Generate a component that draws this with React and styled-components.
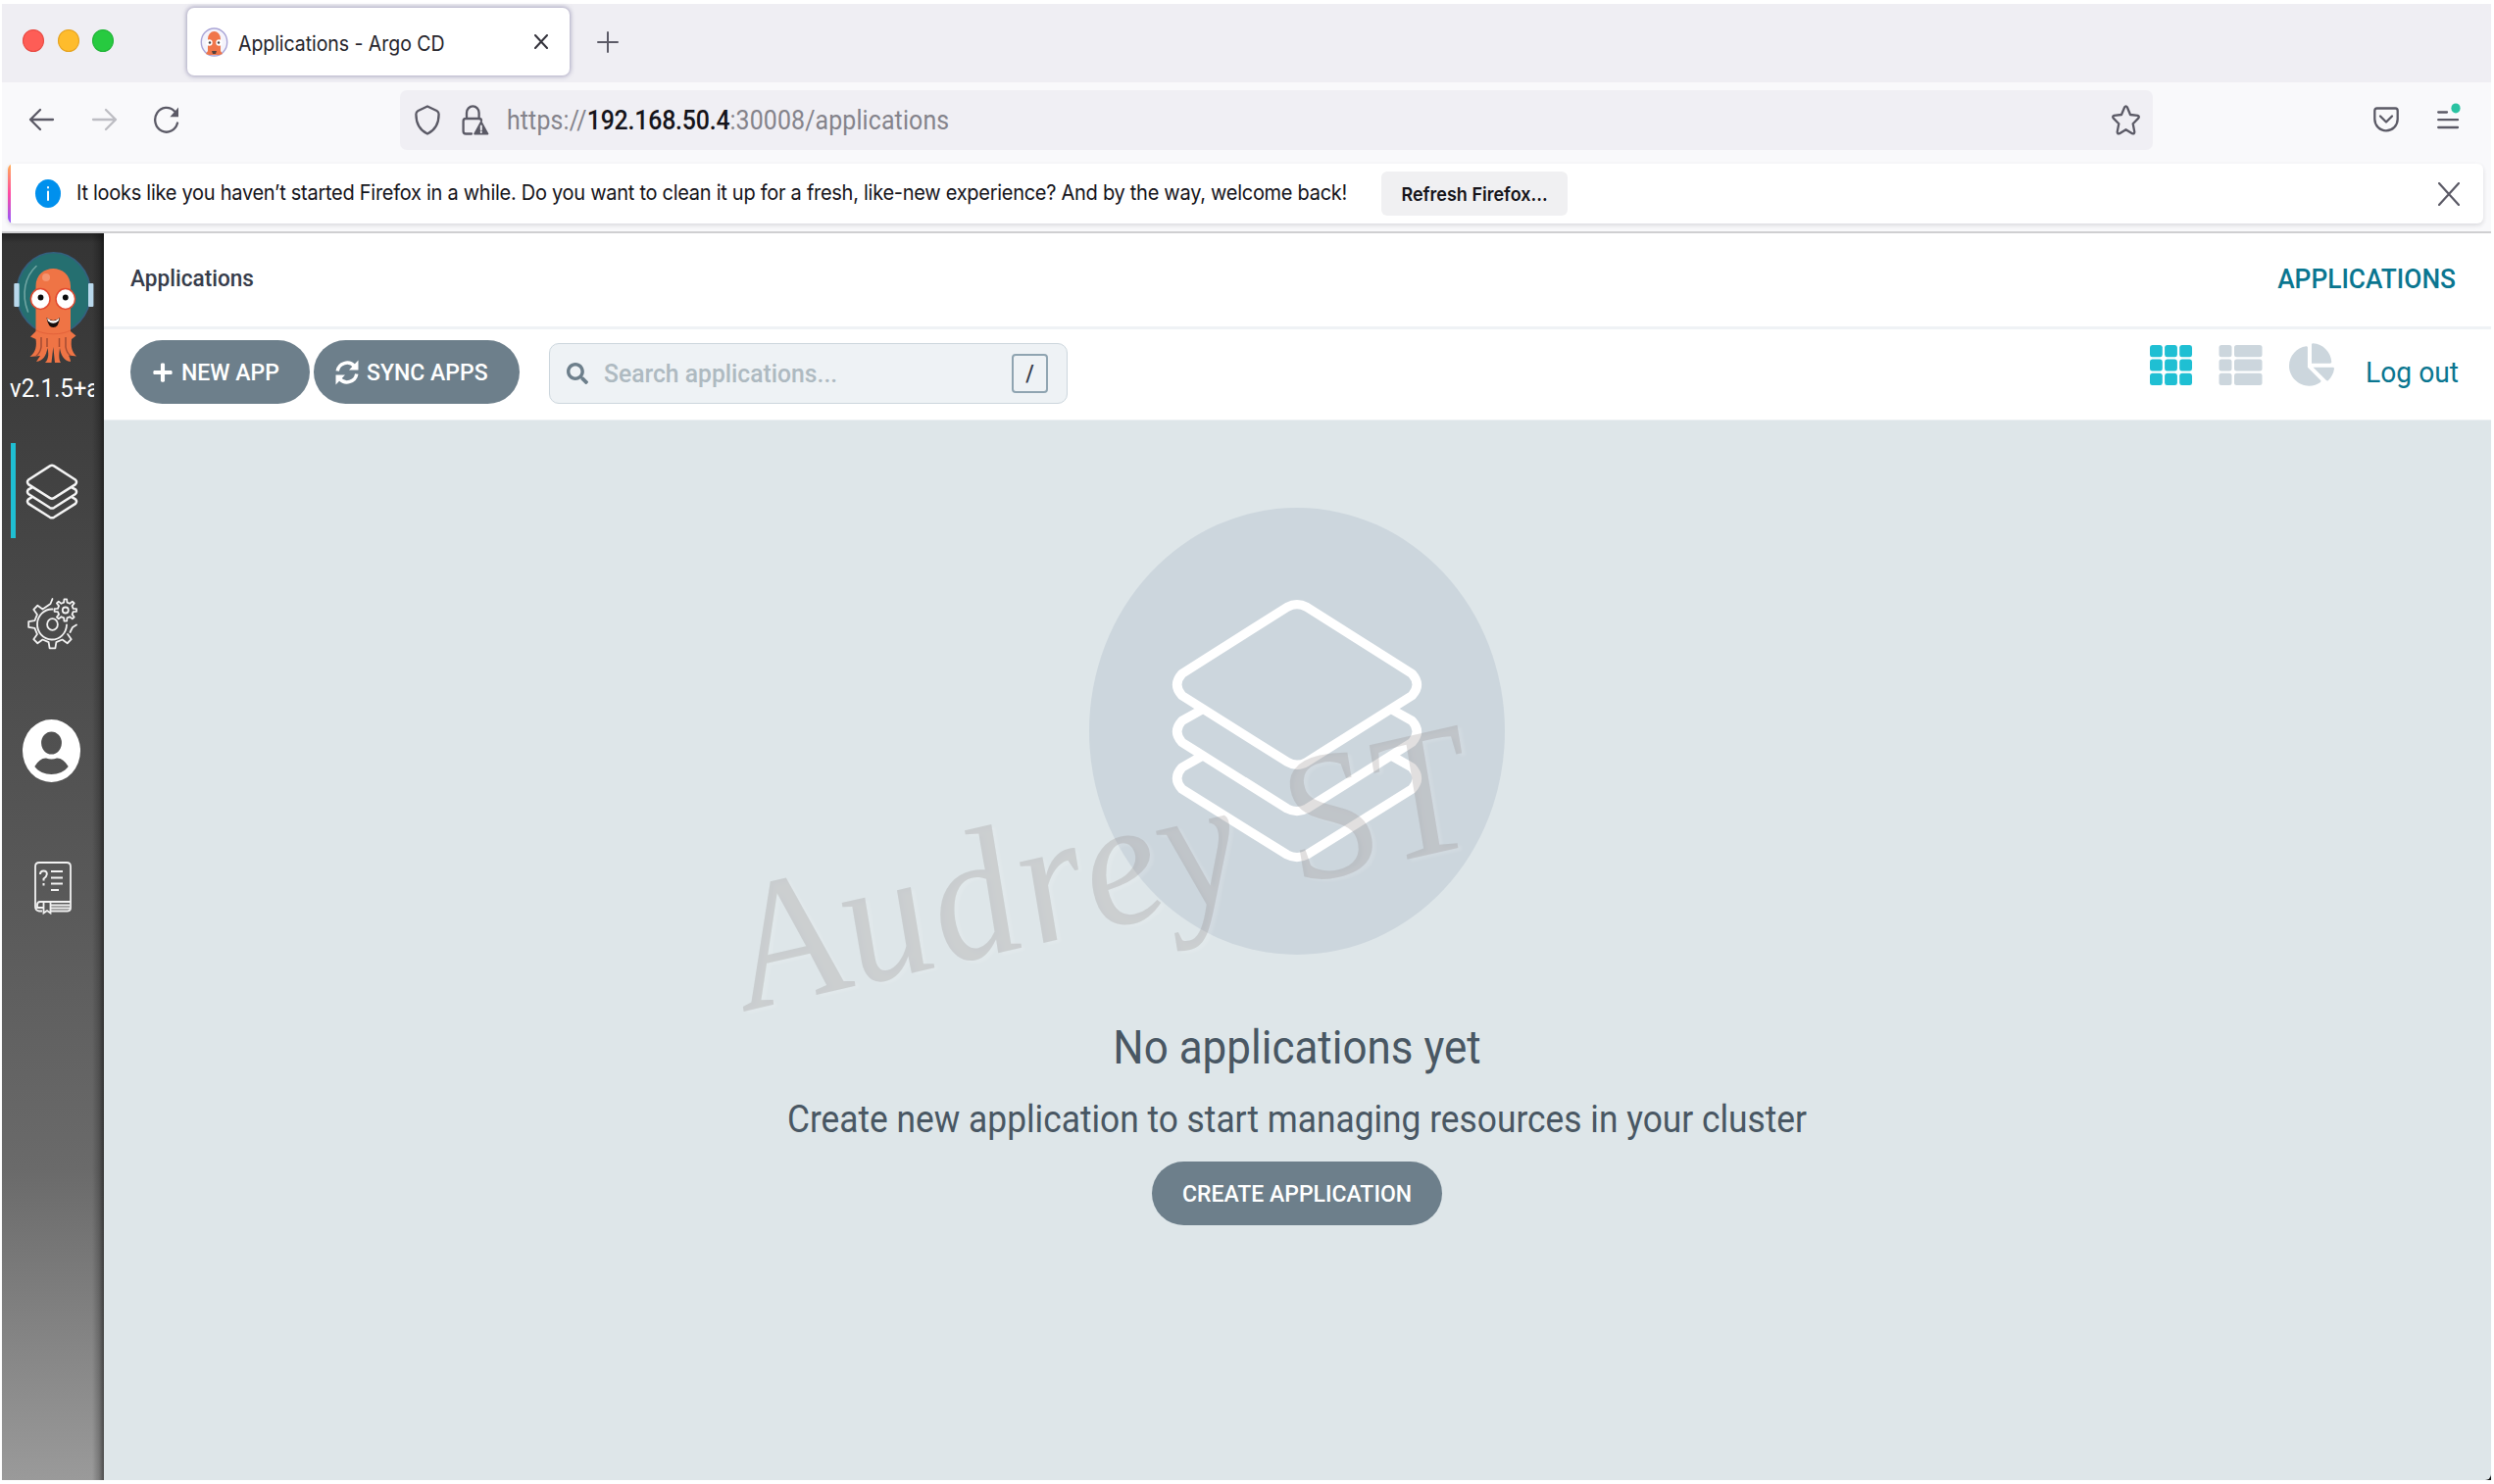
import React from "react";
import styled, { createGlobalStyle } from "styled-components";
import { FaPlus, FaSearch, FaChartPie } from "react-icons/fa";

const Global = createGlobalStyle`
  * { box-sizing: border-box; }
  html, body { margin: 0; padding: 0; background: #fff; }
  svg { display: block; flex: none; }
  button { border: 0; padding: 0; margin: 0; background: none; font: inherit; color: inherit; }
`;

const roboto = `Roboto, "Liberation Sans", sans-serif`;
const inter = `Inter, "Liberation Sans", sans-serif`;

const Label = styled.span`
  display: block;
  flex: none;
  white-space: nowrap;
  line-height: 1;
  font-family: ${(p) => p.$font || roboto};
  font-size: ${(p) => p.$size}px;
  font-weight: ${(p) => p.$weight || 400};
  letter-spacing: ${(p) => p.$track || 0}px;
  color: ${(p) => p.$color || "inherit"};
  transform: scaleY(${(p) => p.$tall || 1.075});
`;

const Window = styled.div`
  width: 2544px;
  height: 1514px;
  padding: 4px 3px 4px 2px;
  display: flex;
  flex-direction: column;
  overflow: hidden;
`;

const TabStrip = styled.header`
  height: 80px;
  background: #efeef3;
  display: flex;
  align-items: flex-start;
  padding-left: 21px;
`;

const Lights = styled.div`
  display: flex;
  gap: 13.5px;
  margin-top: 26px;
`;

const Light = styled.i`
  width: 22px;
  height: 23px;
  border-radius: 50%;
  background: ${(p) => p.$fill};
  border: 1px solid ${(p) => p.$edge};
`;

const Tab = styled.div`
  width: 390px;
  height: 69px;
  margin: 4px 0 0 75px;
  padding: 0 22px 0 13px;
  border-radius: 7px;
  background: #fff;
  box-shadow: 0 0 4px 1px rgba(110, 105, 150, 0.55);
  display: flex;
  align-items: center;
`;

const TabTitle = styled.div`
  flex: 1;
  margin: 6px 0 0 10px;
  display: flex;
`;

const NewTab = styled.button`
  margin: 28px 0 0 28px;
`;

const NavBar = styled.nav`
  height: 76px;
  flex: none;
  background: #f9f9fb;
  display: flex;
  align-items: center;
  padding: 0 31px 0 27px;
`;

const NavButtons = styled.div`
  display: flex;
  align-items: center;
  gap: 36.5px;
  width: 379px;
`;

const UrlBar = styled.div`
  width: 1788px;
  height: 61px;
  border-radius: 7px;
  background: #f0eff4;
  display: flex;
  align-items: center;
  padding: 0 13px 0 15px;
`;

const SiteBadges = styled.div`
  display: flex;
  align-items: center;
  gap: 22px;
`;

const UrlText = styled.div`
  margin: 3px 0 0 18px;
  flex: 1;
  color: #84838b;
  b { color: #15141a; font-weight: 500; letter-spacing: -0.2px; }
`;

const NavRight = styled.div`
  flex: 1;
  display: flex;
  justify-content: flex-end;
  align-items: center;
  gap: 39px;
`;

const MenuSlot = styled.div`
  margin-top: -7px;
`;

const NoticeArea = styled.div`
  height: 76px;
  flex: none;
  background: #f9f9fb;
  padding: 7px 8px 0 6px;
`;

const Notice = styled.div`
  height: 61px;
  border-radius: 6px;
  background: #fff;
  box-shadow: 0 2px 4px rgba(58, 57, 68, 0.16);
  display: flex;
  align-items: center;
  padding-right: 24px;
  overflow: hidden;
`;

const NoticeStripe = styled.i`
  width: 3px;
  align-self: stretch;
  background: linear-gradient(#ffb054, #ff4aa2 50%, #9059ff);
`;

const NoticeText = styled.div`
  margin-bottom: 3px;
`;

const InfoBadge = styled.div`
  width: 26px;
  height: 29px;
  margin: 0 16px 0 25px;
  border-radius: 50%;
  background: #0090ed;
`;

const RefreshButton = styled.button`
  width: 190px;
  height: 45px;
  margin: 0 auto 0 35px;
  padding-top: 2px;
  border-radius: 6px;
  background: #f0f0f2;
  display: flex;
  align-items: center;
  justify-content: center;
`;

const Body = styled.div`
  flex: 1;
  min-height: 0;
  border-top: 2px solid #cfcfd1;
  display: flex;
`;

const Sidebar = styled.aside`
  width: 104px;
  flex: none;
  color: #fff;
  background:
    linear-gradient(90deg, transparent 92px, rgba(0, 0, 0, 0.2) 99px, rgba(0, 0, 0, 0.5) 104px),
    linear-gradient(rgba(0, 0, 0, 0.3), transparent 10px),
    linear-gradient(#343434, #474747 27%, #5b5b5b 56%, #6a6a6a 75%, #9a9a9a);
  display: flex;
  flex-direction: column;
`;

const Brand = styled.div`
  height: 214px;
  padding: 18px 0 0 10px;
`;

const Version = styled.div`
  width: 86px;
  margin: 10px 0 0 -2px;
  overflow: hidden;
  padding: 2px 0;
`;

const SideItem = styled.div`
  height: ${(p) => p.$height}px;
  width: ${(p) => (p.$active ? 95 : 104)}px;
  margin-left: ${(p) => (p.$active ? 9 : 0)}px;
  border-left: ${(p) => (p.$active ? "5px solid #1fbfd3" : "0")};
  padding: ${(p) => p.$pad};
`;

const Main = styled.main`
  flex: 1;
  min-width: 0;
  background: linear-gradient(#fff 50%, #111 50%);
  display: flex;
  flex-direction: column;
`;

const TitleRow = styled.div`
  height: 98px;
  flex: none;
  border-bottom: 3px solid #eff2f5;
  padding: 0 36px 2px 27px;
  display: flex;
  align-items: center;
  justify-content: space-between;
`;

const ActionRow = styled.div`
  height: 93px;
  flex: none;
  border-bottom: 1px solid #edf1f3;
  padding: 0 33px 0 27px;
  display: flex;
  align-items: flex-start;
`;

const Pill = styled.button`
  width: ${(p) => p.$width}px;
  height: 65px;
  margin: ${(p) => p.$margin || "0"};
  padding-left: ${(p) => p.$indent || 0}px;
  border-radius: 33px;
  background: #6d7f8b;
  color: #fff;
  display: flex;
  align-items: center;
  justify-content: ${(p) => (p.$indent ? "flex-start" : "center")};
  gap: 8px;
`;

const Search = styled.div`
  width: 529px;
  height: 62px;
  margin: 14px 0 0 30px;
  border: 1px solid #ccd6dd;
  border-radius: 10px;
  background: #eef2f5;
  display: flex;
  align-items: center;
  padding: 0 19px 0 17px;
  color: #6d7f8b;
`;

const SearchHint = styled.div`
  flex: 1;
  margin-left: 16px;
  display: flex;
`;

const KeyCap = styled.div`
  width: 37px;
  height: 40px;
  border: 2px solid #8fa4b1;
  border-radius: 4px;
  display: flex;
  align-items: center;
  justify-content: center;
`;

const ViewModes = styled.div`
  margin: 13px 0 0 auto;
  display: flex;
  align-items: center;
  gap: 27px;
`;

const LogOut = styled.div`
  margin: 30px 0 0 32px;
`;

const Empty = styled.section`
  flex: 1;
  background: #dee6e9;
  border-bottom-right-radius: 6px;
  position: relative;
  display: flex;
  flex-direction: column;
  align-items: center;
  padding: 89px 1px 0 0;
  color: #495763;
`;

const EmptyBadge = styled.div`
  width: 424px;
  height: 456px;
  border-radius: 50%;
  background: #ccd6dd;
`;

const Heading = styled.div`
  margin-top: 73px;
`;

const Sub = styled.div`
  margin-top: 34px;
`;

const Watermark = styled.div`
  position: absolute;
  left: 672px;
  top: 454px;
  font-family: "Liberation Serif", serif;
  font-style: italic;
  font-size: 176px;
  line-height: 1;
  white-space: nowrap;
  letter-spacing: 4.5px;
  color: rgba(146, 140, 140, 0.28);
  text-shadow: 3px 3px 3px rgba(255, 255, 255, 0.12);
  transform-origin: 0 100%;
  transform: rotate(-12.9deg) skewX(6deg) scaleY(1.06);
`;

function Favicon() {
  return (
    <svg width="29" height="30" viewBox="0 0 29 30">
      <ellipse cx="14.5" cy="15" rx="13.2" ry="14" fill="#f4f3fb" stroke="#a9a4d6" strokeWidth="1.4" />
      <path d="M8 12a6.5 8 0 0 1 13 0v12l2 3-3 1H9l-3-1 2-3z" fill="#f0764a" />
      <circle cx="9.5" cy="15.5" r="3.2" fill="#fff" />
      <circle cx="19.5" cy="15.5" r="3.2" fill="#fff" />
      <circle cx="10" cy="15.5" r="1.2" fill="#444" />
      <circle cx="19" cy="15.5" r="1.2" fill="#444" />
      <path d="M12 24h5l-1 3h-3z" fill="#54413d" />
    </svg>
  );
}

function Cross({ w, h, sw, color }) {
  return (
    <svg width={w} height={h} viewBox={`0 0 ${w} ${h}`} fill="none" stroke={color} strokeWidth={sw} strokeLinecap="round">
      <path d={`M1 1L${w - 1} ${h - 1}M${w - 1} 1L1 ${h - 1}`} />
    </svg>
  );
}

function Arrow({ color, flip }) {
  return (
    <svg width="27" height="24" viewBox="0 0 27 24" fill="none" stroke={color} strokeWidth="2.3" strokeLinecap="round" strokeLinejoin="round">
      <path d={flip ? "M2 12H25M15 2L25 12L15 22" : "M25 12H2M12 2L2 12L12 22"} />
    </svg>
  );
}

function Reload() {
  return (
    <svg width="27" height="28" viewBox="0 0 27 28" fill="none" stroke="#5b5a66" strokeWidth="2.3" strokeLinecap="round">
      <path d="M25 17.5A11.6 12.4 0 1 1 22 5.5" />
      <path d="M26 1.5v9.7h-8.6z" fill="#5b5a66" stroke="none" />
    </svg>
  );
}

function Shield() {
  return (
    <svg width="26" height="31" viewBox="0 0 26 31" fill="none" stroke="#5b5a66" strokeWidth="2.3" strokeLinejoin="round">
      <path d="M13 1.5L22.5 6Q24.6 7.2 24.6 9.5C24.6 19 20.5 26 13 29.5C5.5 26 1.4 19 1.4 9.5Q1.4 7.2 3.5 6Z" />
    </svg>
  );
}

function Lock() {
  return (
    <svg width="28" height="31" viewBox="0 0 28 31" fill="none" stroke="#5b5a66" strokeWidth="2.3" strokeLinecap="round" strokeLinejoin="round">
      <path d="M5 13.5V8a6.3 6.6 0 0 1 12.6 0v5.5M10 29.5H4.2Q1.6 29.5 1.6 27V16.5Q1.6 14 4.2 14H17.5Q20 14 20 16" />
      <path d="M19.8 17.2L26.6 29.6H13Z" fill="#5b5a66" stroke="#5b5a66" strokeWidth="1.6" />
      <path d="M19.8 21.5v3.8M19.8 27.6v.3" stroke="#f0eff4" strokeWidth="2" />
    </svg>
  );
}

function Star() {
  return (
    <svg width="29" height="31" viewBox="0 0 29 31" fill="none" stroke="#5b5a66" strokeWidth="2.3" strokeLinejoin="round">
      <path d="M13.1 2.5Q14.5 .4 15.9 2.5L19 10L26.5 10.9Q28.7 11.6 27.2 13.6L21.7 19.2L23.3 27.6Q23.3 30 21 29.2L14.5 25.2L8 29.2Q5.7 30 5.7 27.6L7.3 19.2L1.8 13.6Q.3 11.6 2.5 10.9L10 10Z" />
    </svg>
  );
}

function Pocket() {
  return (
    <svg width="26" height="26" viewBox="0 0 26 26" fill="none" stroke="#5b5a66" strokeWidth="2.3" strokeLinecap="round" strokeLinejoin="round">
      <path d="M3.6 1.5H22.4Q24.7 1.5 24.7 4V12.5A11.7 11.8 0 0 1 1.3 12.5V4Q1.3 1.5 3.6 1.5ZM7 9.5L13 15.5L19 9.5" />
    </svg>
  );
}

function Menu() {
  return (
    <svg width="24" height="32" viewBox="0 0 24 32" fill="none" stroke="#5b5a66" strokeWidth="2.3" strokeLinecap="round">
      <path d="M1.2 11.5H10M1.2 19.2H21M1.2 27H21" />
      <ellipse cx="19" cy="7.4" rx="4.6" ry="5" fill="#2ac3a2" stroke="none" />
    </svg>
  );
}

function InfoMark() {
  return (
    <svg width="26" height="29" viewBox="0 0 26 29" stroke="#fff" strokeWidth="2" strokeLinecap="round">
      <path d="M13 12.5v8.6M13 8v.4" />
    </svg>
  );
}

function ArgoLogo() {
  return (
    <svg width="86" height="116" viewBox="0 0 86 116">
      <ellipse cx="42.7" cy="43" rx="37.6" ry="41.2" fill="#256f70" stroke="#35607f" strokeWidth="1.6" />
      <rect x="2.3" y="33" width="5.4" height="24" rx="1" fill="#b9d8ec" />
      <rect x="78" y="33" width="5.4" height="24" rx="1" fill="#b9d8ec" />
      <path d="M25 15.5C13.5 26 9.5 44 16.5 62" fill="none" stroke="#6fa5a2" strokeWidth="1.6" strokeLinecap="round" />
      <path d="M24.5 36C24.500 12 60 12 60 36V82L65.500 86.500L61 90C60 98 61.500 103 66 107.500L58 106.500C60 111 60 112 60 113C53 112 50 106 49 99C48 106 48 111 50 114H44L42.300 98L40.500 114H34C38 110 37.500 104 36.500 99C35 107 32 112 25 113L29 107L18.500 108C25 103 25.500 96 24.500 90L19 87.500L24.500 82Z" fill="#ef7445" />
      <path d="M25 81C34 86 51 86 60 81" fill="none" stroke="#e3623a" strokeWidth="1" />
      <path d="M30 88V98Q29 104 25 107M36 89V98M48.500 89V98M55 88V98Q56 104 60 107" fill="none" stroke="#a44b33" strokeWidth="1.5" />
      <circle cx="35" cy="27" r="4" fill="#f5946f" />
      <ellipse cx="29.2" cy="49" rx="9.8" ry="10.4" fill="#fff" stroke="#e2492f" strokeWidth="1.5" />
      <ellipse cx="54.8" cy="49" rx="9.8" ry="10.4" fill="#fff" stroke="#e2492f" strokeWidth="1.5" />
      <circle cx="29.5" cy="47.5" r="2.9" fill="#0b0b0b" />
      <circle cx="54.8" cy="47.5" r="2.9" fill="#0b0b0b" />
      <path d="M35.5 68Q42.300 74 49 68Q48 78 42.300 78Q37 78 35.500 68Z" fill="#150d0c" />
      <path d="M36 68.500Q42.300 74 48.600 68.500L47.500 71.500Q42.300 76 37 71.500Z" fill="#fff" />
    </svg>
  );
}

const layerPath =
  "M606 304Q636 288 666 304L988 508Q1018 542 988 575L666 778Q636 796 606 778L284 575Q254 542 284 508Z" +
  "M345 618L284 652Q254 685 284 718L606 921Q636 937 666 921L988 718Q1018 685 988 652L927 618" +
  "M345 760L284 795Q254 828 284 861L606 1062Q636 1078 666 1062L988 861Q1018 828 988 795L927 760";

function Layers({ w, h, sw, box, color }) {
  return (
    <svg width={w} height={h} viewBox={box} preserveAspectRatio="none" fill="none" stroke={color} strokeWidth={sw} strokeLinejoin="round">
      <path d={layerPath} />
    </svg>
  );
}

function cog(cx, cy, n, outer, inner, from, to) {
  const pts = [];
  const step = (Math.PI * 2) / n;
  for (let i = from; i < to; i += 1) {
    const a = i * step - Math.PI / 2;
    [[-0.27, inner], [-0.15, outer], [0.15, outer], [0.27, inner]].forEach(([d, r]) => {
      pts.push(`${(cx + r * Math.cos(a + d * step)).toFixed(2)} ${(cy + r * Math.sin(a + d * step)).toFixed(2)}`);
    });
  }
  return `M${pts.join("L")}`;
}

function Gears() {
  return (
    <svg width="52" height="55" viewBox="0 0 52 55" fill="none" stroke="#f2f2f2" strokeWidth="1.8" strokeLinejoin="round" strokeLinecap="round">
      <path d={`${cog(25.5, 28, 8, 24.5, 18.5, 3, 8)}L23.5 7L25.5 2`} />
      <path d="M50 28.500L46 31L43.500 36" />
      <path d="M25.500 12.500A15 15.500 0 1 0 40 28.500" />
      <ellipse cx="25.5" cy="28" rx="5.4" ry="5.8" />
      <path d={`${cog(38.8, 13.5, 8, 11.3, 8, 0, 8)}Z`} />
      <circle cx="38.8" cy="13.5" r="3" />
    </svg>
  );
}

function Account() {
  return (
    <svg width="59" height="64" viewBox="0 0 60 64" preserveAspectRatio="none">
      <path fill="#fff" fillRule="evenodd" d="M30 0A30 32 0 0 1 30 64A30 32 0 0 1 30 0ZM30 12.500A10.600 11.500 0 0 0 30 35.500A10.600 11.500 0 0 0 30 12.500ZM12.500 48C20 58.500 40 58.500 47.500 48Q42 39 35.500 39.500Q30 41.500 24.500 39.500Q18 39 12.500 48Z" />
    </svg>
  );
}

function Manual() {
  return (
    <svg width="38" height="54" viewBox="0 0 38 54" fill="none" stroke="#f2f2f2" strokeWidth="1.8">
      <path d="M8 50.500H5Q1 50 1 46V5Q1 1 5 1H33Q37 1 37 5V47Q37 50.500 34 50.500H17" />
      <path d="M37 41H6Q3 41 3 44V47H9M17 44.500H36M17 47.500H36M9.500 41V52.500L13 50L16.500 52.500V41" />
      <path d="M17 10H29M17 16.500H29M17 22.500H29M17 29H25" strokeWidth="2.2" />
      <path d="M6 13Q6 9.500 9.500 9.500Q13 9.500 12.800 13Q12.500 15.500 9.500 17.500V19.500M9.500 22V24.500" strokeWidth="2" />
    </svg>
  );
}

function SyncIcon() {
  return (
    <svg width="24" height="26" viewBox="0 0 24 26" fill="none" stroke="#fff" strokeWidth="3.5">
      <path d="M2.200 11.500A10 10 0 0 1 19.500 6.500M21.800 14.500A10 10 0 0 1 4.500 19.500" />
      <path d="M23.500 .5V10.500H14ZM.5 25.500V15.500H10Z" fill="#fff" stroke="none" />
    </svg>
  );
}

function GridIcon() {
  return (
    <svg width="43" height="41" viewBox="0 0 44.4 41" preserveAspectRatio="none" fill="#1fbfd3">
      {[0, 14.4, 28.8].map((y) => [0, 15.6, 31.2].map((x) => (
        <rect key={`${x}-${y}`} x={x} y={y} width="13.2" height="12.2" rx="2.5" />
      )))}
    </svg>
  );
}

function ListIcon() {
  return (
    <svg width="45" height="41" viewBox="0 0 45 41" fill="#ccd6dd">
      {[0, 14.4, 28.8].map((y) => (
        <g key={y}>
          <rect x="0.5" y={y} width="13" height="12.2" rx="2.5" />
          <rect x="16" y={y} width="28.500" height="12.2" rx="2.5" />
        </g>
      ))}
    </svg>
  );
}

export default function App() {
  return (
    <>
      <Global />
      <Window>
        <TabStrip>
          <Lights>
            <Light $fill="#fe5d56" $edge="#e8473f" />
            <Light $fill="#febc2c" $edge="#e5a11c" />
            <Light $fill="#27ca40" $edge="#1db233" />
          </Lights>
          <Tab>
            <Favicon />
            <TabTitle>
              <Label $font={inter} $size={19.5} $track={-0.05} $color="#25242b">Applications - Argo CD</Label>
            </TabTitle>
            <Cross w={14} h={15} sw={2} color="#33323b" />
          </Tab>
          <NewTab>
            <svg width="22" height="22" viewBox="0 0 22 22" stroke="#5b5a66" strokeWidth="2" strokeLinecap="round">
              <path d="M11 1V21M1 11H21" />
            </svg>
          </NewTab>
        </TabStrip>

        <NavBar>
          <NavButtons>
            <Arrow color="#5b5a66" />
            <Arrow color="#bdbdc3" flip />
            <Reload />
          </NavButtons>
          <UrlBar>
            <SiteBadges>
              <Shield />
              <Lock />
            </SiteBadges>
            <UrlText>
              <Label $size={24.9} $track={0.13}>https://<b>192.168.50.4</b>:30008/applications</Label>
            </UrlText>
            <Star />
          </UrlBar>
          <NavRight>
            <Pocket />
            <MenuSlot><Menu /></MenuSlot>
          </NavRight>
        </NavBar>

        <NoticeArea>
          <Notice>
            <NoticeStripe />
            <InfoBadge><InfoMark /></InfoBadge>
            <NoticeText>
              <Label $font={inter} $size={20} $track={-0.275} $color="#15141a">
                It looks like you haven’t started Firefox in a while. Do you want to clean it up for a fresh, like-new experience? And by the way, welcome back!
              </Label>
            </NoticeText>
            <RefreshButton>
              <Label $font={inter} $size={18} $weight={600} $color="#15141a">Refresh Firefox…</Label>
            </RefreshButton>
            <Cross w={22} h={24} sw={2.2} color="#5b5a66" />
          </Notice>
        </NoticeArea>

        <Body>
          <Sidebar>
            <Brand>
              <ArgoLogo />
              <Version>
                <Label $size={24}>v2.1.5+a</Label>
              </Version>
            </Brand>
            <SideItem $active $height={97} $pad="21px 0 0 10px">
              <Layers w={54} h={57} sw={36} box="240 270 792 824" color="#f4f4f4" />
            </SideItem>
            <SideItem $height={124} $pad="60px 0 0 26px"><Gears /></SideItem>
            <SideItem $height={145} $pad="61px 0 0 21px"><Account /></SideItem>
            <SideItem $height={120} $pad="61px 0 0 33px"><Manual /></SideItem>
          </Sidebar>

          <Main>
            <TitleRow>
              <Label $size={22.6} $weight={500} $color="#363c4a">Applications</Label>
              <Label $size={26.3} $weight={500} $color="#0a7690">APPLICATIONS</Label>
            </TitleRow>
            <ActionRow>
              <Pill $width={183} $indent={22} $margin="11px 4px 0 0">
                <FaPlus size={22} />
                <Label $size={23} $weight={500}>NEW APP</Label>
              </Pill>
              <Pill $width={210} $indent={22} $margin="11px 0 0 0">
                <SyncIcon />
                <Label $size={23} $weight={500}>SYNC APPS</Label>
              </Pill>
              <Search>
                <FaSearch size={22} />
                <SearchHint><Label $size={24.7} $color="#aebac1" $weight={500}>Search applications...</Label></SearchHint>
                <KeyCap><Label $size={22} $weight={500} $color="#363c4a">/</Label></KeyCap>
              </Search>
              <ViewModes>
                <GridIcon />
                <ListIcon />
                <FaChartPie size={46} color="#ccd6dd" />
              </ViewModes>
              <LogOut><Label $size={28.2} $color="#0a7690">Log out</Label></LogOut>
            </ActionRow>
            <Empty>
              <EmptyBadge>
                <Layers w={424} h={456} sw={28} box="0 0 1272 1368" color="#fff" />
              </EmptyBadge>
              <Heading><Label $size={44}>No applications yet</Label></Heading>
              <Sub><Label $size={35.35}>Create new application to start managing resources in your cluster</Label></Sub>
              <Pill $width={296} $margin="25px 0 0 0">
                <Label $size={23} $weight={500}>CREATE APPLICATION</Label>
              </Pill>
              <Watermark>Audrey ST</Watermark>
            </Empty>
          </Main>
        </Body>
      </Window>
    </>
  );
}
